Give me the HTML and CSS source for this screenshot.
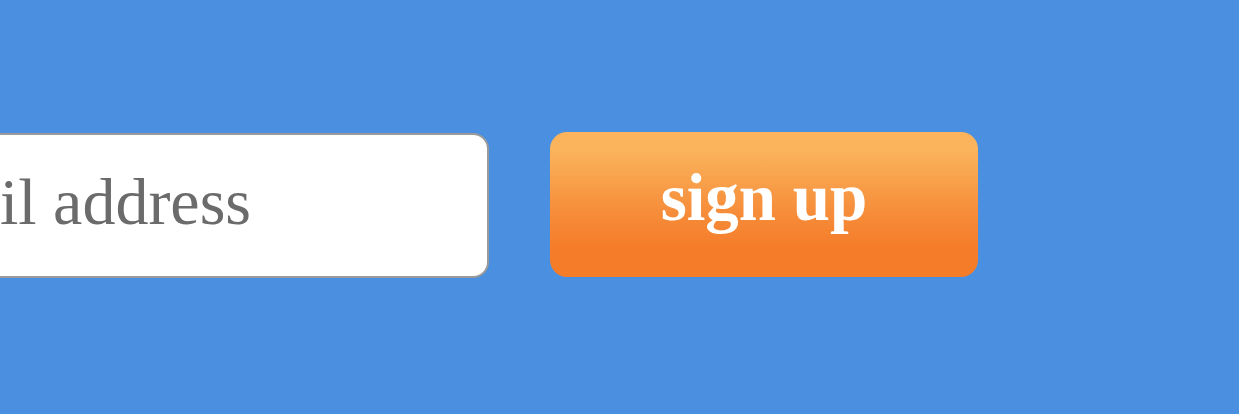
FILE: index.html
```html
<!DOCTYPE html>
<html lang="en">
<head>
<meta charset="utf-8">
<link rel="stylesheet" href="styles.css">
</head>
<body>
<form class="signup">
  <input class="email" type="email" placeholder="email address">
  <button class="submit" type="button">sign up</button>
</form>
</body>
</html>
```
FILE: styles.css
```css
html, body {
  margin: 0;
  height: 100%;
  background: #4a8fe0;
}
body {
  overflow: hidden;
}
.signup {
  display: flex;
  align-items: flex-start;
  padding-top: 132px;
  margin-left: -131px;
  gap: 61px;
}
.email {
  box-sizing: border-box;
  width: 620px;
  height: 145px;
  margin-top: 1px;
  flex: none;
  background: #fff;
  border: 2px solid #9a9a9a;
  border-radius: 16px;
  padding: 0 0 8px 19px;
  font-family: "Liberation Serif", serif;
  font-size: 66px;
  color: #6b6b6b;
  outline: none;
}
.email::placeholder {
  color: #6b6b6b;
  opacity: 1;
}
.submit {
  box-sizing: border-box;
  width: 428px;
  height: 145px;
  flex: none;
  border: none;
  border-radius: 17px;
  background: linear-gradient(to bottom, #fbb45c 12%, #f68d3a 55%, #f57c29 80%);
  color: #fff;
  font-family: "Liberation Serif", serif;
  font-weight: bold;
  font-size: 67px;
  padding: 0 0 14px;
  cursor: pointer;
}
```
